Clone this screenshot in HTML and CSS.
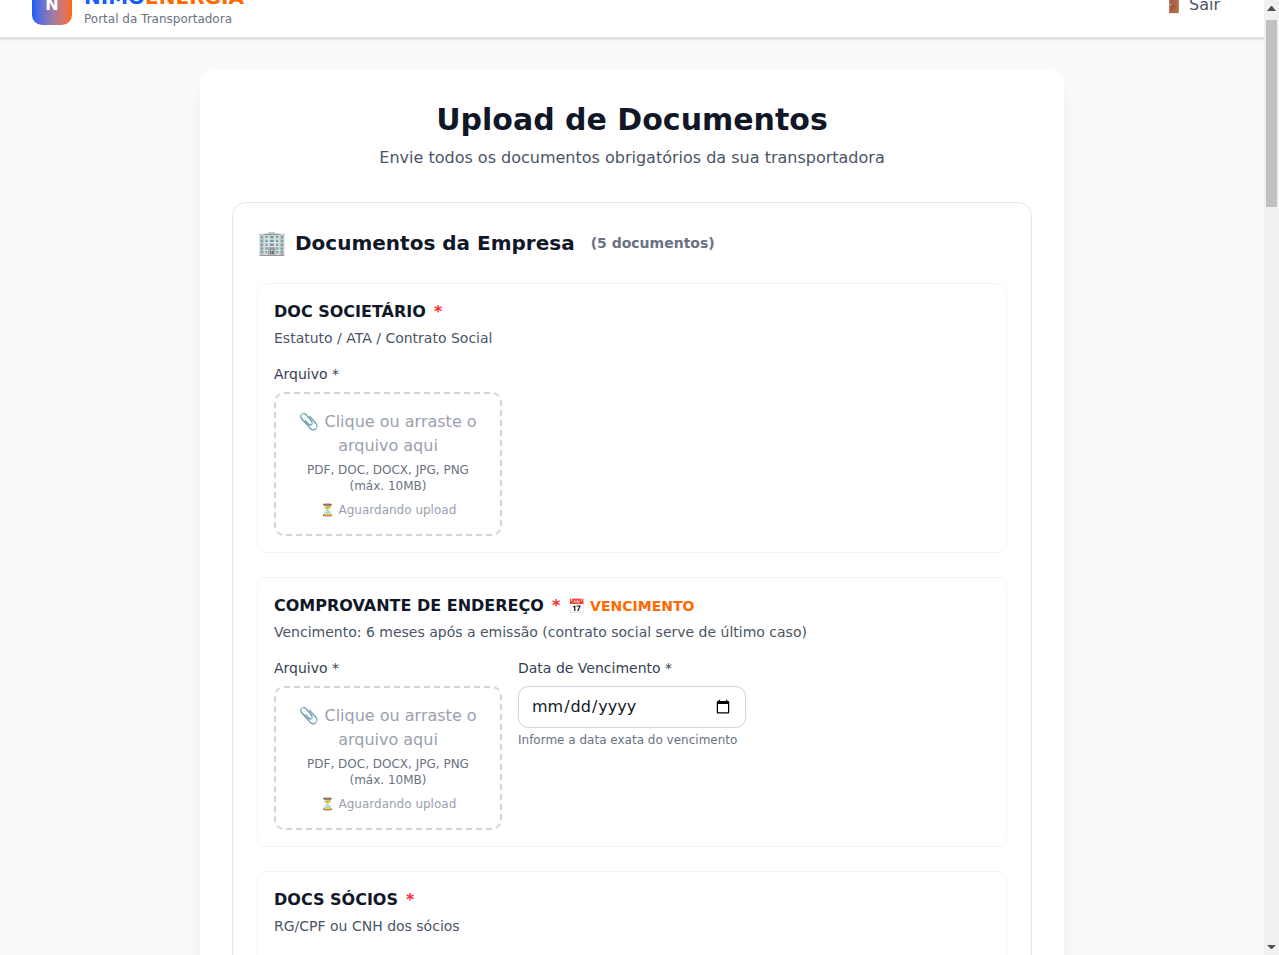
FILE: index.html
```html
<!DOCTYPE html>
<html lang="pt-BR">
<head>
<meta charset="utf-8">
<meta name="viewport" content="width=device-width, initial-scale=1">
<title>Upload de Documentos</title>
<link rel="stylesheet" href="styles.css">
</head>
<body>
<div class="shell">
  <div class="page">
    <header class="topbar">
      <div class="brand">
        <div class="brand-mark">N</div>
        <div>
          <div class="brand-name"><span class="blue">NIMO</span><span class="orange">ENERGIA</span></div>
          <div class="brand-sub">Portal da Transportadora</div>
        </div>
      </div>
      <button class="logout" type="button">🚪 Sair</button>
    </header>

    <main class="main">
      <div class="card">
        <div class="intro">
          <h1>Upload de Documentos</h1>
          <p>Envie todos os documentos obrigatórios da sua transportadora</p>
        </div>

        <section class="group">
          <h2 class="group-title"><span class="group-icon">🏢</span>Documentos da Empresa<span class="group-count">(5 documentos)</span></h2>

          <div class="docs">
            <article class="doc">
              <h3 class="doc-title">DOC SOCIETÁRIO <span class="required">*</span></h3>
              <p class="doc-text">Estatuto / ATA / Contrato Social</p>
              <div class="fields">
                <div class="field">
                  <span class="label" id="file-1">Arquivo *</span>
                  <button class="dropzone" type="button" aria-describedby="file-1">
                    <span class="drop-main">📎 Clique ou arraste o arquivo aqui</span>
                    <span class="drop-types">PDF, DOC, DOCX, JPG, PNG (máx. 10MB)</span>
                    <span class="drop-status">⏳ Aguardando upload</span>
                  </button>
                </div>
              </div>
            </article>

            <article class="doc">
              <h3 class="doc-title">COMPROVANTE DE ENDEREÇO <span class="required">*</span> <span class="due">📅 VENCIMENTO</span></h3>
              <p class="doc-text">Vencimento: 6 meses após a emissão (contrato social serve de último caso)</p>
              <div class="fields">
                <div class="field">
                  <span class="label" id="file-2">Arquivo *</span>
                  <button class="dropzone" type="button" aria-describedby="file-2">
                    <span class="drop-main">📎 Clique ou arraste o arquivo aqui</span>
                    <span class="drop-types">PDF, DOC, DOCX, JPG, PNG (máx. 10MB)</span>
                    <span class="drop-status">⏳ Aguardando upload</span>
                  </button>
                </div>
                <div class="field">
                  <label class="label" for="due-2">Data de Vencimento *</label>
                  <input class="date" type="date" id="due-2">
                  <p class="hint">Informe a data exata do vencimento</p>
                </div>
              </div>
            </article>

            <article class="doc doc-next">
              <h3 class="doc-title">DOCS SÓCIOS <span class="required">*</span></h3>
              <p class="doc-text">RG/CPF ou CNH dos sócios</p>
            </article>
          </div>
        </section>
      </div>
    </main>
  </div>

  <div class="scrollbar" aria-hidden="true">
    <svg class="arrow" viewBox="0 0 15 17"><path d="M7 6h1l4 5H3z"/></svg>
    <div class="track"><div class="thumb"></div></div>
    <svg class="arrow" viewBox="0 0 15 17"><path d="M3 7h9l-4 4H7z"/></svg>
  </div>
</div>
</body>
</html>
```
FILE: styles.css
```css
* {
  box-sizing: border-box;
}

body,
h1,
h2,
h3,
p {
  margin: 0;
}

body {
  font-family: "DejaVu Sans", sans-serif;
  font-size: 16px;
  line-height: 24px;
  color: #101828;
  background: #f9fafb;
}

button,
input {
  font: inherit;
}

.shell {
  display: flex;
  height: 100vh;
  overflow: hidden;
}

.page {
  flex: 1;
  min-width: 0;
  overflow: hidden;
  background: #f8fafc;
}

.topbar {
  display: flex;
  align-items: center;
  justify-content: space-between;
  height: 65px;
  margin-top: -27px;
  padding: 0 32px;
  background: #fff;
  border-bottom: 1px solid #e5e7eb;
  box-shadow: 0 1px 3px rgba(0, 0, 0, 0.1), 0 1px 2px rgba(0, 0, 0, 0.1);
}

.brand {
  display: flex;
  align-items: center;
  gap: 12px;
}

.brand-mark {
  display: grid;
  place-items: center;
  width: 40px;
  height: 40px;
  border-radius: 10px;
  background: linear-gradient(to right in oklab, #155dfc, #ff6900);
  color: #fff;
  font-weight: 700;
}

.brand-name {
  font-size: 20px;
  line-height: 28px;
  font-weight: 700;
}

.blue {
  color: #155dfc;
}

.orange {
  color: #ff6900;
}

.brand-sub {
  font-size: 12px;
  line-height: 16px;
  color: #6a7282;
}

.logout {
  padding: 8px 12px;
  border: 0;
  background: none;
  color: #4a5565;
}

.main {
  max-width: 896px;
  margin: 0 auto;
  padding: 32px 16px;
}

.card {
  padding: 32px;
  border-radius: 16px;
  background: #fff;
  box-shadow: 0 20px 25px -5px rgba(0, 0, 0, 0.1), 0 8px 10px -6px rgba(0, 0, 0, 0.1);
}

.intro {
  margin-bottom: 32px;
  text-align: center;
}

.intro h1 {
  margin-bottom: 8px;
  font-size: 30px;
  line-height: 36px;
}

.intro p {
  color: #4a5565;
}

.group {
  padding: 24px;
  border: 1px solid #e5e7eb;
  border-radius: 14px;
}

.group-title {
  display: flex;
  align-items: center;
  margin-bottom: 24px;
  font-size: 20px;
  line-height: 32px;
}

.group-icon {
  margin-right: 8px;
  font-size: 24px;
}

.group-count {
  margin-left: 16px;
  font-size: 14px;
  color: #6a7282;
}

.docs {
  display: grid;
  gap: 24px;
}

.doc {
  padding: 16px;
  border: 1px solid #f3f4f6;
  border-radius: 10px;
}

.doc-next {
  min-height: 270px;
}

.doc-title {
  display: flex;
  align-items: center;
  gap: 8px;
  margin-bottom: 4px;
  font-size: 16px;
  line-height: 24px;
}

.required {
  color: #fb2c36;
}

.due {
  font-size: 14px;
  color: #ff6900;
}

.doc-text {
  margin-bottom: 16px;
  font-size: 14px;
  line-height: 20px;
  color: #4a5565;
}

.fields {
  display: grid;
  grid-template-columns: repeat(3, 1fr);
  gap: 16px;
}

.label {
  display: block;
  margin-bottom: 8px;
  font-size: 14px;
  line-height: 20px;
  color: #364153;
}

.dropzone {
  display: block;
  width: 100%;
  padding: 16px;
  border: 2px dashed #d1d5dc;
  border-radius: 10px;
  background: none;
  text-align: center;
}

.drop-main,
.drop-types,
.drop-status {
  display: block;
}

.drop-main {
  color: #99a1af;
}

.drop-types {
  margin-top: 4px;
  font-size: 12px;
  line-height: 16px;
  color: #6a7282;
}

.drop-status {
  margin-top: 8px;
  font-size: 12px;
  line-height: 16px;
  color: #99a1af;
}

.date {
  display: block;
  width: 100%;
  height: 42px;
  padding: 8px 12px;
  border: 1px solid #d1d5dc;
  border-radius: 10px;
  background: #fff;
  color: #101828;
}

.hint {
  margin-top: 4px;
  font-size: 12px;
  line-height: 16px;
  color: #6a7282;
}

.scrollbar {
  display: flex;
  flex-direction: column;
  width: 15px;
  background: #f1f1f1;
}

.arrow {
  width: 15px;
  height: 17px;
  fill: #505050;
}

.track {
  flex: 1;
  padding: 3px 2px;
}

.thumb {
  height: 187px;
  background: #c1c1c1;
}
```
